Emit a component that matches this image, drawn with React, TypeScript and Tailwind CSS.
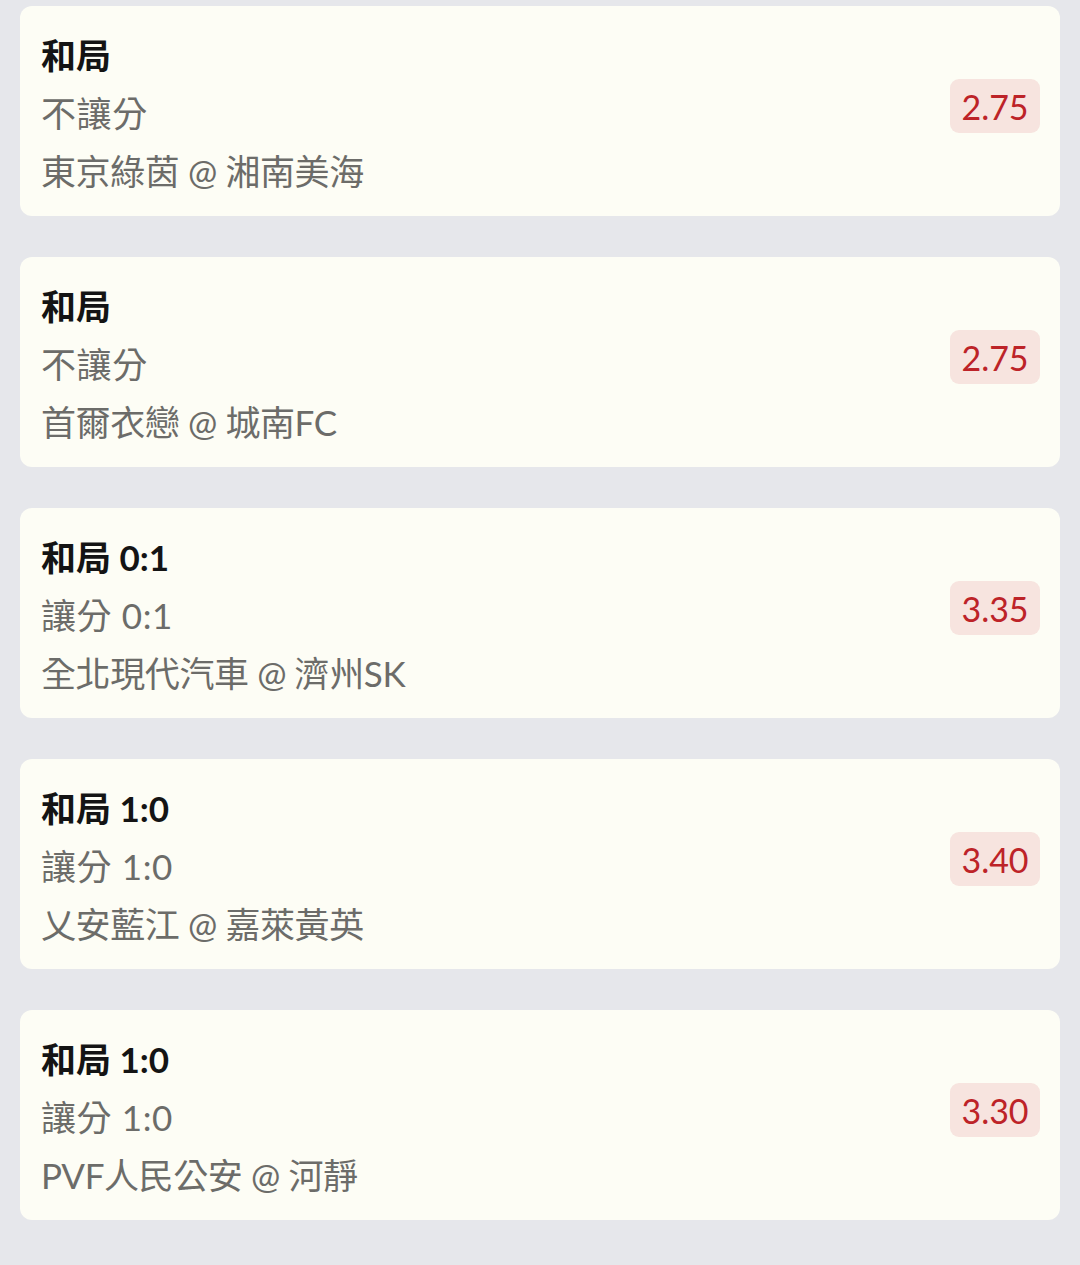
type Bet = {
    title: string
    handicap: string
    match: string
    odds: string
}

const bets: Bet[] = [
    { title: '和局', handicap: '不讓分', match: '東京綠茵 @ 湘南美海', odds: '2.75' },
    { title: '和局', handicap: '不讓分', match: '首爾衣戀 @ 城南FC', odds: '2.75' },
    { title: '和局 0:1', handicap: '讓分 0:1', match: '全北現代汽車 @ 濟州SK', odds: '3.35' },
    { title: '和局 1:0', handicap: '讓分 1:0', match: '乂安藍江 @ 嘉萊黃英', odds: '3.40' },
    { title: '和局 1:0', handicap: '讓分 1:0', match: 'PVF人民公安 @ 河靜', odds: '3.30' },
]

/** 一つのベット行 */
function BetCard({ bet }: { bet: Bet }) {
    return (
        <div className="flex flex-row items-center justify-between h-[210px] rounded-[12px] bg-[#fdfdf5] pl-[21px] pr-[20px] pt-[20px] pb-[16px]">
            <div className="flex flex-col">
                <p className="h-[58px] leading-[58px] text-[35px] font-bold text-[#141414]">{bet.title}</p>
                <p className="h-[58px] leading-[58px] text-[35px] tracking-[0.6px] text-[#6c6c69]">{bet.handicap}</p>
                <p className="h-[58px] leading-[58px] text-[35px] tracking-[-0.4px] text-[#6c6c69]">{bet.match}</p>
            </div>
            <div className="mb-[14px] flex h-[54px] w-[90px] items-center justify-center rounded-[9px] bg-[#f7e4df] text-[34px] text-[#bd2328]">
                {bet.odds}
            </div>
        </div>
    )
}

export default function App() {
    return (
        <div
            className="min-h-screen bg-[#e6e7eb] px-[20px] pt-[6px] pb-[45px] flex flex-col gap-[41px]"
            style={{ fontFamily: "Lato, 'Noto Sans CJK TC', sans-serif" }}
        >
            {bets.map((bet, i) => (
                <BetCard key={i} bet={bet} />
            ))}
        </div>
    )
}
